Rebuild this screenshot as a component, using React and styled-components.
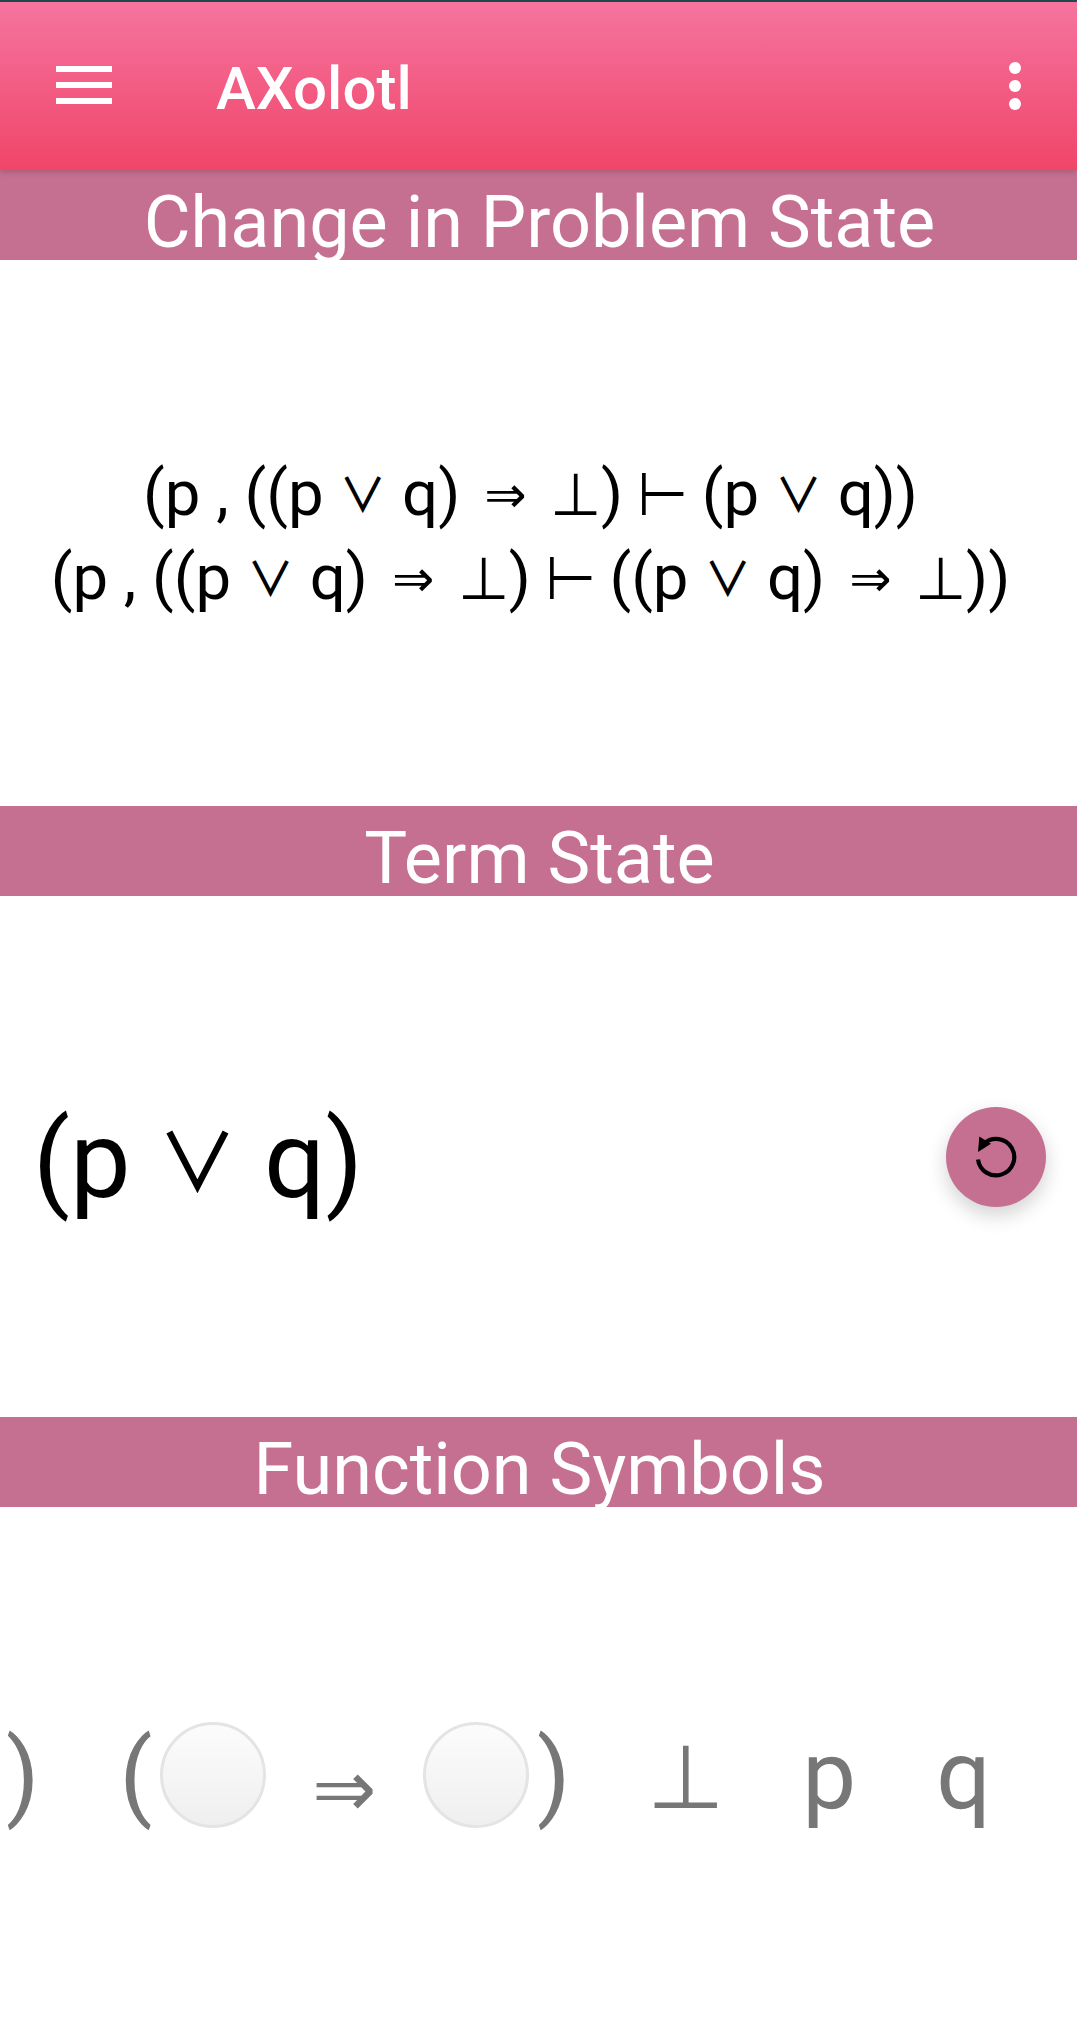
import React from "react";
import styled, { createGlobalStyle } from "styled-components";

const GlobalStyle = createGlobalStyle`
	html, body {
		margin: 0;
		padding: 0;
		background: #fff;
	}
	body {
		font-family: Roboto, sans-serif;
	}
`;

const Term = () => (
	<>
		(p <Or>∨</Or> q)
	</>
);

const Implies = () => (
	<>
		&nbsp;<Arrow>⇒</Arrow>&nbsp;<Logic>⊥</Logic>
	</>
);

const App = () => {
	return (
		<Screen>
			<GlobalStyle />
			<StatusLine />
			<AppBar>
				<MenuBars>
					<span />
					<span />
					<span />
				</MenuBars>
				<AppTitle>AXolotl</AppTitle>
				<MoreDots>
					<span />
					<span />
					<span />
				</MoreDots>
			</AppBar>

			<SectionBar>Change in Problem State</SectionBar>
			<ProblemPanel>
				<ProblemLine>
					(p , (<Term /><Implies />) <Turnstile>⊢</Turnstile> <Term />)
				</ProblemLine>
				<ProblemLine>
					(p , (<Term /><Implies />) <Turnstile>⊢</Turnstile> (<Term /><Implies />))
				</ProblemLine>
			</ProblemPanel>

			<SectionBar>Term State</SectionBar>
			<TermPanel>
				<TermText>
					<Term />
				</TermText>
				<ResetButton>
					<svg width="46" height="46" viewBox="0 0 46 46" fill="none">
						<path
							d="M5 25.5A18.2 18.2 0 1 0 11 9.5"
							stroke="#000"
							strokeWidth="4.2"
						/>
						<path d="M6.3 2.5 5 18 18 9.7z" fill="#000" />
					</svg>
				</ResetButton>
			</TermPanel>

			<SectionBar>Function Symbols</SectionBar>
			<SymbolPanel>
				<SymbolRow>
					<Symbol>)</Symbol>
					<Group>
						<Symbol>(</Symbol>
						<Slot />
						<BigArrow>⇒</BigArrow>
						<Slot />
						<Symbol>)</Symbol>
					</Group>
					<BottomSymbol>
						<Logic>⊥</Logic>
					</BottomSymbol>
					<Symbol>p</Symbol>
					<Symbol>q</Symbol>
				</SymbolRow>
			</SymbolPanel>
		</Screen>
	);
};

const Screen = styled.div`
	width: 1077px;
	height: 2031px;
	overflow: hidden;
	display: flex;
	flex-direction: column;
	background: #fff;
`;

const StatusLine = styled.div`
	height: 2px;
	background: #1f4a50;
`;

const AppBar = styled.header`
	height: 168px;
	display: flex;
	align-items: center;
	padding: 0 56px;
	background: linear-gradient(#f5749f, #f04568);
	position: relative;
	z-index: 1;
	box-shadow: 0 2px 6px rgba(0, 0, 0, 0.18);
`;

const MenuBars = styled.div`
	width: 56px;
	margin-top: -2px;
	display: flex;
	flex-direction: column;
	gap: 10px;

	span {
		height: 6px;
		background: #fff;
	}
`;

const AppTitle = styled.h1`
	margin: 0 0 0 104px;
	padding-top: 5px;
	flex: 1;
	font-size: 60px;
	font-weight: 500;
	color: #fff;
`;

const MoreDots = styled.div`
	display: flex;
	flex-direction: column;
	gap: 6px;

	span {
		width: 12px;
		height: 12px;
		border-radius: 50%;
		background: #fff;
	}
`;

const SectionBar = styled.div`
	height: 90px;
	padding-left: 2px;
	line-height: 105px;
	overflow: hidden;
	text-align: center;
	font-size: 72px;
	color: #fff;
	background: #c67091;
`;

const Or = styled.span`
	font-family: "Noto Sans CJK SC", sans-serif;
	font-size: 0.74em;
	font-weight: 500;
	line-height: 1;
	vertical-align: 0.07em;
`;

const Arrow = styled.span`
	margin: 0 8px 0 9px;
	font-family: "DejaVu Sans Mono", monospace;
	font-size: 1.08em;
	line-height: 1;
`;

const Logic = styled.span`
	font-size: 0.93em;
	line-height: 1;
`;

const Turnstile = styled(Logic)`
	margin: 0 -2px;
`;

const ProblemPanel = styled.section`
	height: 541px;
	padding: 5px 16px 0 0;
	display: flex;
	flex-direction: column;
	justify-content: center;
	align-items: center;
`;

const ProblemLine = styled.div`
	font-size: 63.5px;
	line-height: 84px;
	color: #000;
	white-space: nowrap;
`;

const TermPanel = styled.section`
	height: 521px;
	display: flex;
	align-items: center;
	justify-content: space-between;
	padding: 0 31px 0 33px;
`;

const TermText = styled.div`
	margin-top: 6px;
	font-size: 108px;
	color: #000;
	white-space: nowrap;
`;

const ResetButton = styled.div`
	width: 100px;
	height: 100px;
	border-radius: 50%;
	background: #c67091;
	display: flex;
	align-items: center;
	justify-content: center;
	box-shadow: 0 8px 20px rgba(0, 0, 0, 0.18);
`;

const SymbolPanel = styled.section`
	flex: 1;
	padding-top: 12px;
	display: flex;
	align-items: center;
	overflow: hidden;
`;

const SymbolRow = styled.div`
	display: flex;
	align-items: center;
	gap: 80px;
	margin-left: 6px;
	color: #777;
`;

const Group = styled.div`
	display: flex;
	align-items: center;
	gap: 8px;
`;

const Symbol = styled.span`
	font-size: 96px;
	line-height: 130px;
`;

const BottomSymbol = styled(Symbol)`
	margin: 0 -3px;
`;

const BigArrow = styled(Symbol)`
	margin: 0 39px;
	padding-top: 18px;
	font-family: "DejaVu Sans Mono", monospace;
	font-size: 104px;
`;

const Slot = styled.div`
	width: 106px;
	height: 106px;
	box-sizing: border-box;
	border-radius: 50%;
	border: 3px solid #e4e4e4;
	background: linear-gradient(#fcfcfc, #efefef);
`;

export default App;
